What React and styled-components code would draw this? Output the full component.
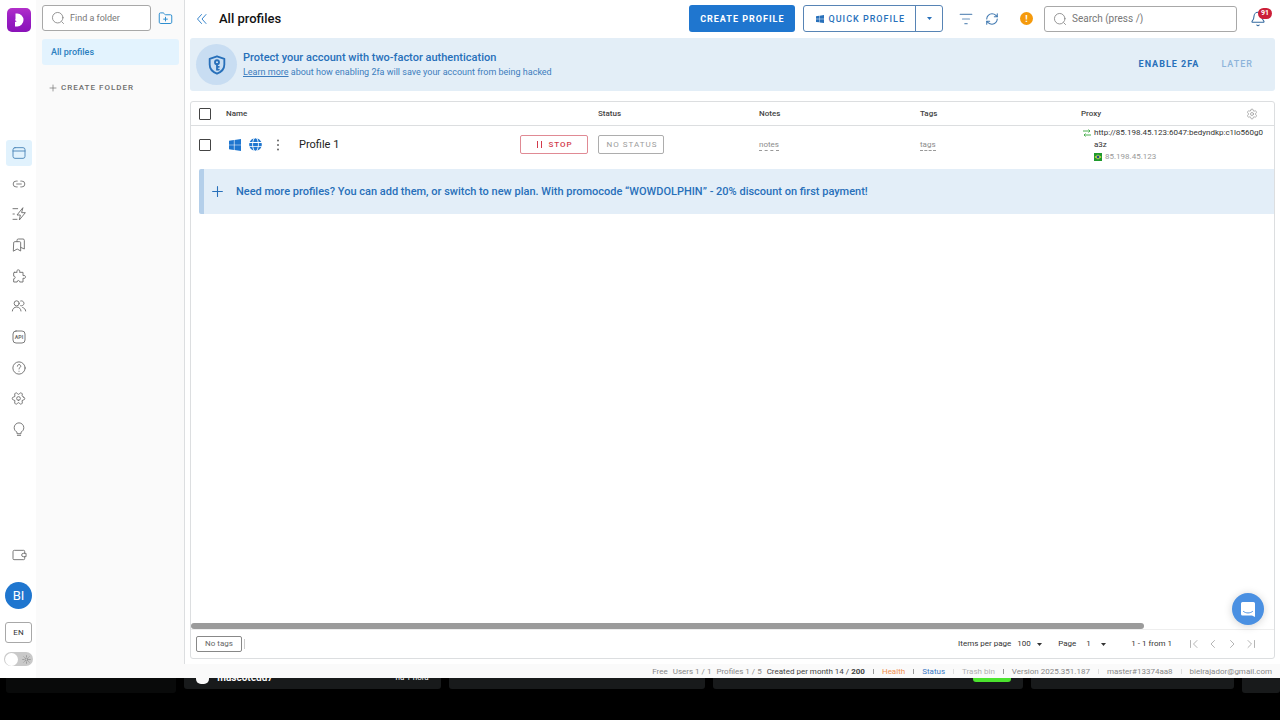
import React from "react";
import styled, { createGlobalStyle } from "styled-components";
import { Link2, Settings, FolderPlus, RefreshCw, Bell } from "lucide-react";
import { FaGlobe } from "react-icons/fa";

const blue = "#1f76cf";
const deepBlue = "#2870ba";
const line = "#dcdee0";

const GlobalStyle = createGlobalStyle`
  *, *::before, *::after { box-sizing: border-box; }
  body {
    margin: 0;
    background: #000;
    color: #333;
    font: 400 9px/12px Roboto, "Liberation Sans", sans-serif;
  }
  button, input, select {
    font: inherit;
    color: inherit;
    margin: 0;
    padding: 0;
    border: 0;
    background: none;
  }
  button { cursor: pointer; }
  svg { display: block; flex: none; }
`;

const Screen = styled.div`
  min-height: 100vh;
  display: flex;
  flex-direction: column;
`;

const AppWindow = styled.div`
  flex: 1;
  display: grid;
  grid-template-columns: 36px 149px minmax(0, 1fr);
  background: #fafafa;
`;

const NavRail = styled.nav`
  display: flex;
  flex-direction: column;
  align-items: center;
  padding: 8px 0 12px 1px;
  background: #fff;
`;

const Logo = styled.a`
  display: block;
  border-radius: 5px;
`;

const NavGroup = styled.div`
  display: flex;
  flex-direction: column;
  justify-content: space-between;
  height: 302px;
  margin: 108px 0 auto;
`;

const NavButton = styled.button`
  display: grid;
  place-items: center;
  width: 26px;
  height: 26px;
  border-radius: 3px;
  color: ${(p) => (p.$active ? "#4b86b8" : "#707070")};
  background: ${(p) => (p.$active ? "#e1f2fd" : "transparent")};
`;

const Avatar = styled.button`
  width: 27px;
  height: 27px;
  margin-top: 14px;
  border-radius: 50%;
  background: ${blue};
  color: #fff;
  font-size: 13px;
`;

const Language = styled.button`
  width: 27px;
  height: 21px;
  margin-top: 13px;
  border: 1px solid #a8a8a8;
  border-radius: 3px;
  font-size: 8px;
`;

const ThemeSwitch = styled.label`
  display: flex;
  align-items: center;
  gap: 4px;
  width: 29px;
  height: 14px;
  margin-top: 9px;
  padding: 0 2px 0 1px;
  border-radius: 7px;
  background: #c9c9c9;
  color: #858585;
  input {
    appearance: none;
    width: 13px;
    height: 13px;
    border-radius: 50%;
    background: #fff;
  }
`;

const Folders = styled.aside`
  padding: 5px 5px 0 6px;
  border-right: 1px solid ${line};
  margin-bottom: 14px;
`;

const FolderTools = styled.div`
  display: flex;
  align-items: center;
  gap: 7px;
`;

const SearchBox = styled.label`
  display: flex;
  align-items: center;
  gap: 5px;
  width: ${(p) => p.$width};
  height: 26px;
  padding-left: 8px;
  border: 1px solid #a8a8a8;
  border-radius: 3px;
  background: #fff;
  color: #808080;
  font-size: ${(p) => p.$size};
  input { flex: 1; min-width: 0; outline: 0; }
  input::placeholder { color: #777; opacity: 1; }
`;

const IconButton = styled.button`
  display: grid;
  place-items: center;
  color: ${(p) => p.$color || "#666"};
  &:disabled { color: #b5b5b5; }
`;

const FolderLink = styled.a`
  display: flex;
  align-items: center;
  height: 26px;
  margin-top: 8px;
  padding-left: 9px;
  border-radius: 3px;
  background: #e3f3fe;
  color: #2b80c0;
  font-size: 9px;
  font-weight: 500;
  text-decoration: none;
`;

const CreateFolder = styled.button`
  display: flex;
  align-items: center;
  gap: 4px;
  margin: 17px 0 0 7px;
  color: #6e6e6e;
  font-size: 8px;
  font-weight: 500;
  letter-spacing: 1px;
`;

const Main = styled.main`
  display: flex;
  flex-direction: column;
`;

const Content = styled.div`
  flex: 1;
  display: flex;
  flex-direction: column;
  padding: 0 5px 5px;
  background: #fff;
`;

const TopBar = styled.header`
  display: flex;
  align-items: center;
  height: 38px;
  padding: 0 2px 1px 6px;
`;

const PageTitle = styled.h1`
  margin: 0 auto 0 11px;
  color: #111;
  font-size: 13px;
  font-weight: 500;
  line-height: 16px;
`;

const PrimaryButton = styled.button`
  height: 27px;
  padding: 0 10px 0 11px;
  border-radius: 3px;
  background: ${blue};
  color: #fff;
  font-size: 9px;
  font-weight: 700;
  letter-spacing: 1px;
`;

const SplitButton = styled.div`
  display: flex;
  height: 27px;
  margin-left: 8px;
  border: 1px solid #5784b5;
  border-radius: 3px;
  color: ${deepBlue};
  button {
    display: flex;
    align-items: center;
    justify-content: center;
    gap: 5px;
    padding: 0 10px 0 12px;
    font-size: 9px;
    font-weight: 500;
    letter-spacing: 1px;
  }
  button + button {
    width: 27px;
    padding: 0;
    border-left: 1px solid #5784b5;
  }
`;

const Actions = styled.div`
  display: flex;
  align-items: center;
  gap: 12px;
  margin: 0 11px 0 16px;
`;

const Warning = styled.button`
  width: 13px;
  height: 13px;
  margin-left: 9px;
  border-radius: 50%;
  background: #f59a0c;
  color: #fff;
  font-weight: 700;
`;

const Notifications = styled.button`
  position: relative;
  margin: 0 7px 0 13px;
  color: #33699e;
`;

const Badge = styled.span`
  position: absolute;
  top: -3px;
  left: 8px;
  padding: 0 3px;
  border-radius: 6px;
  background: #cc1f38;
  color: #fff;
  font-size: 7px;
  font-weight: 700;
  line-height: 11px;
`;

const Banner = styled.section`
  display: flex;
  align-items: center;
  height: 53px;
  padding: 0 11px 0 6px;
  border-radius: 3px;
  background: #e3eef7;
  color: ${deepBlue};
`;

const BannerIcon = styled.div`
  display: grid;
  place-items: center;
  width: 41px;
  height: 41px;
  border-radius: 50%;
  background: #c8ddf2;
`;

const BannerText = styled.div`
  margin: 0 auto 0 6px;
  h2 { margin: 0; font-size: 11px; font-weight: 500; line-height: 15px; }
  p { margin: 0; font-size: 9px; line-height: 15px; color: #3d7dbd; }
  a { color: inherit; }
`;

const TextButton = styled.button`
  padding: 6px 11px 8px;
  color: ${(p) => (p.$muted ? "#8db4da" : deepBlue)};
  font-size: 9px;
  font-weight: ${(p) => (p.$muted ? 500 : 700)};
  letter-spacing: 1px;
`;

const Card = styled.section`
  flex: 1;
  display: flex;
  flex-direction: column;
  margin-top: 10px;
  border: 1px solid ${line};
  border-radius: 3px;
`;

const Table = styled.table`
  width: 100%;
  table-layout: fixed;
  border-collapse: collapse;
  th, td { padding: 0; text-align: left; }
  th {
    height: 24px;
    font-size: 8px;
    font-weight: 500;
    color: #444;
  }
  thead { box-shadow: inset 0 -1px ${line}; }
  td { height: 37px; color: #8c8c8c; }
  th:first-child, td:first-child { padding-left: 8px; }
`;

const Col = styled.col`
  width: ${(p) => p.$width};
`;

const Check = styled.input`
  appearance: none;
  display: block;
  width: 12px;
  height: 12px;
  border: 1px solid #444;
  border-radius: 1px;
  &:checked { background: ${blue}; }
`;

const HeadSplit = styled.div`
  display: flex;
  align-items: center;
  justify-content: space-between;
  padding-right: 16px;
`;

const NameCell = styled.div`
  display: flex;
  align-items: center;
  gap: 8px;
  padding: 0 10px 0 3px;
  color: ${blue};
`;

const ProfileName = styled.span`
  margin: 0 auto 0 4px;
  color: #222;
  font-size: 11px;
`;

const OutlineButton = styled.button`
  display: inline-flex;
  align-items: center;
  justify-content: center;
  gap: 6px;
  width: ${(p) => p.$width};
  height: 19px;
  padding-left: 2px;
  border: 1px solid ${(p) => (p.$danger ? "#e08a94" : "#adadad")};
  border-radius: 2px;
  color: ${(p) => (p.$danger ? "#d23a4b" : "#9c9c9c")};
  font-size: 8px;
  font-weight: ${(p) => (p.$danger ? 500 : 400)};
  letter-spacing: 1px;
`;

const DashedButton = styled.button`
  border-bottom: 1px dashed #999;
  font-size: 8px;
  line-height: 10px;
`;

const Proxy = styled.div`
  display: grid;
  grid-template-columns: 8px minmax(0, 1fr);
  column-gap: 3px;
  padding: 0 10px 0 2px;
  color: #333;
  font-size: 8px;
  word-break: break-all;
  > svg { margin-top: 2px; }
`;

const ProxyIp = styled.div`
  display: flex;
  align-items: center;
  gap: 3px;
  grid-column: 2;
  color: #9a9a9a;
`;

const Promo = styled.button`
  display: flex;
  align-items: center;
  gap: 12px;
  height: 45px;
  margin: 6px 0 auto 8px;
  padding-left: 7px;
  border-left: 5px solid #b4cfea;
  border-radius: 2px 0 0 2px;
  background: #e3eef8;
  color: ${deepBlue};
  font-size: 11px;
  font-weight: 500;
`;

const ScrollTrack = styled.div`
  display: flex;
  align-items: flex-end;
  height: 8px;
`;

const ScrollThumb = styled.div`
  width: 88%;
  height: 6px;
  border-radius: 3px;
  background: #9b9b9b;
`;

const CardFooter = styled.footer`
  display: flex;
  align-items: center;
  height: 29px;
  padding: 0 17px 0 5px;
  border-top: 1px solid #eee;
  font-size: 8px;
  color: #333;
`;

const NoTags = styled.button`
  width: 46px;
  height: 16px;
  border: 1px solid #888;
  border-radius: 2px;
  color: #666;
`;

const Divider = styled.span`
  width: 1px;
  height: 10px;
  margin: 0 auto 0 2px;
  background: #ccc;
`;

const PagerField = styled.label`
  display: flex;
  align-items: center;
  margin-right: 16px;
  select {
    appearance: none;
    width: ${(p) => p.$width};
    margin: 0 5px 0 ${(p) => p.$gap};
  }
`;

const PagerCount = styled.span`
  margin: 0 16px 0 9px;
`;

const PagerButtons = styled.div`
  display: flex;
  gap: 7px;
`;

const StatusBar = styled.footer`
  display: flex;
  align-items: center;
  justify-content: flex-end;
  height: 14px;
  padding: 1px 8px 0 0;
  color: #888;
  font-size: 8px;
  white-space: nowrap;
`;

const StatusItem = styled.span`
  margin-left: 5px;
  color: ${(p) => p.$color || "inherit"};
  a { color: inherit; text-decoration: none; }
  b { font-weight: 700; }
`;

const StatusMark = styled.span`
  width: 1px;
  height: 5px;
  margin: 0 3px 0 8px;
  background: ${(p) => (p.$light ? "#ddd" : "#999")};
`;

const ChatButton = styled.button`
  position: fixed;
  right: 16px;
  bottom: 95px;
  display: grid;
  place-items: center;
  width: 32px;
  height: 32px;
  border-radius: 50%;
  background: #4a90e2;
  box-shadow: 0 1px 8px rgba(0, 0, 0, 0.18);
`;

const Backdrop = styled.div`
  display: grid;
  grid-template-columns: 170fr 256fr 256fr 309fr 203fr 38fr;
  column-gap: 8px;
  height: 42px;
  padding-left: 6px;
  background: #000;
`;

const DarkCard = styled.div`
  display: flex;
  justify-content: ${(p) => (p.$end ? "flex-end" : "space-between")};
  height: ${(p) => (p.$tall ? "15px" : "11px")};
  padding: 0 12px;
  border-radius: 0 0 3px 3px;
  background: ${(p) => (p.$dim ? "#090a0a" : "#181a1b")};
  color: #fafafa;
`;

const DarkUser = styled.strong`
  display: flex;
  align-items: center;
  gap: 8px;
  height: 12px;
  margin-top: -6px;
  font-size: 10px;
  &::before {
    content: "";
    width: 13px;
    height: 12px;
    border-radius: 5px;
    background: #fafafa;
  }
`;

const DarkTime = styled.span`
  margin-top: -6px;
  font-size: 8px;
`;

const GreenPill = styled.span`
  width: 38px;
  height: 4px;
  border-radius: 0 0 3px 3px;
  background: #4be32e;
`;

const Icon = ({ size = 16, width = 1.4, children }) => (
  <svg width={size} height={size} viewBox="0 0 24 24" fill="none" stroke="currentColor"
    strokeWidth={width} strokeLinecap="round" strokeLinejoin="round" aria-hidden="true">
    {children}
  </svg>
);

const WindowsIcon = ({ size }) => (
  <svg width={size} height={size} viewBox="0 0 24 24" fill="currentColor" aria-hidden="true">
    <path d="M0 3.449L9.75 2.1v9.451H0zM10.949 1.949L24 0v11.4H10.949zM0 12.6h9.75v9.451L0 20.699zM10.949 12.6H24V24l-13.051-1.801z" />
  </svg>
);

const Caret = () => (
  <svg width="5" height="3" viewBox="0 0 5 3" fill="currentColor" aria-hidden="true">
    <path d="M0 0h5L2.5 3z" />
  </svg>
);

const Lens = () => (
  <Icon size={14} width={1.4}>
    <circle cx="11.5" cy="11.5" r="9" />
    <path d="M18.5 18.5 21.5 21.5" />
  </Icon>
);

const Plus = ({ size, width = 2 }) => (
  <Icon size={size} width={width}><path d="M12 3v18M3 12h18" /></Icon>
);

const SideGear = styled(Settings)`
  transform: rotate(90deg);
`;

const navItems = [
  ["Profiles", <Icon key="i"><rect x="3" y="4" width="18" height="16" rx="3" /><path d="M3 9h18" /></Icon>],
  ["Proxies", <Link2 key="i" size={14} strokeWidth={1.5} />],
  ["Scripts", <Icon key="i"><path d="M3 4h7M3 12h2M3 20h6M17.500 3 9 13.500h5L12.500 21 21.500 10h-5z" /></Icon>],
  ["Bookmarks", <Icon key="i"><path d="M4 8.500A1.500 1.500 0 0 1 5.500 7H13a1.500 1.500 0 0 1 1.500 1.500V21l-5.200-3L4 21zM9 7V5a2 2 0 0 1 2-2h7a2 2 0 0 1 2 2v13l-5.500-2.500" /></Icon>],
  ["Extensions", <Icon key="i"><path d="M5 6.500h4.200C8 3.800 9.500 2.800 11 2.800s3 1 1.800 3.700H18v5c2.700-1 3.700.4 3.700 1.900s-1 2.900-3.700 1.900V21h-5c.2-3-4-3-3.800 0H4v-4.800c3 .2 3-4.200 0-4V7.500a1 1 0 0 1 1-1z" /></Icon>],
  ["Users", <Icon key="i"><circle cx="8.500" cy="8" r="3.800" /><path d="M2 19.500a6.500 6 0 0 1 13 0M14.500 4.400a3.800 3.800 0 1 1 0 7.200M17.500 14.300c3 .9 4.200 2.700 4.500 5.200" /></Icon>],
  ["API", (
    <Icon key="i">
      <rect x="3" y="3" width="18" height="18" rx="4.500" />
      <text x="12" y="14.500" textAnchor="middle" fontSize="8" fontWeight="700" fill="currentColor" stroke="none">API</text>
    </Icon>
  )],
  ["Help", <Icon key="i"><circle cx="12" cy="12" r="9.200" /><path d="M9.600 9.300a2.500 2.500 0 1 1 3.700 2.200c-.9.500-1.300 1-1.300 2M12 16.800v.2" /></Icon>],
  ["Settings", <SideGear key="i" size={15} strokeWidth={1.5} />],
  ["Tips", <Icon key="i"><path d="M9 18.500v-1.700C6.500 15.500 4.800 13 4.800 10a7.200 7.200 0 0 1 14.400 0c0 3-1.700 5.500-4.200 6.800v1.700zM9.500 21.500h5" /></Icon>],
];

function Navigation() {
  return (
    <NavRail aria-label="Main">
      <Logo href="#" aria-label="Home">
        <svg width="24" height="24" viewBox="0 0 24 24">
          <defs>
            <linearGradient id="logo" x1="0" y1="0" x2="0" y2="1">
              <stop offset="0" stopColor="#b22fc9" />
              <stop offset="0.400" stopColor="#9a1fc4" />
              <stop offset="1" stopColor="#8a12b8" />
            </linearGradient>
          </defs>
          <rect width="24" height="24" rx="5" fill="url(#logo)" />
          <path d="M8.500 5.500h1.800a6.200 6.500 0 0 1 0 13H8V14l1.800-.8L8 12.200l.5-1.200z" fill="#fff" />
        </svg>
      </Logo>
      <NavGroup>
        {navItems.map(([label, icon], i) => (
          <NavButton key={label} $active={i === 0} aria-label={label}>{icon}</NavButton>
        ))}
      </NavGroup>
      <NavButton aria-label="Billing">
        <Icon>
          <path d="M20.500 9V6.500A1.500 1.500 0 0 0 19 5H5a2 2 0 0 0-2 2v10.500A1.500 1.500 0 0 0 4.500 19H19a1.500 1.500 0 0 0 1.500-1.500V15" />
          <path d="M22 9.500h-3.500a2.500 2.500 0 0 0 0 5H22z" />
        </Icon>
      </NavButton>
      <Avatar>BI</Avatar>
      <Language>EN</Language>
      <ThemeSwitch>
        <input type="checkbox" aria-label="Dark theme" />
        <Icon size={9} width={2}>
          <circle cx="12" cy="12" r="4" />
          <path d="M12 2v2M12 20v2M2 12h2M20 12h2M5 5l1 1M18 18l1 1M5 19l1-1M18 6l1-1" />
        </Icon>
      </ThemeSwitch>
    </NavRail>
  );
}

function FolderPanel() {
  return (
    <Folders>
      <FolderTools>
        <SearchBox $width="109px" $size="9px">
          <Lens />
          <input placeholder="Find a folder" aria-label="Find a folder" />
        </SearchBox>
        <IconButton $color="#2f8fd0" aria-label="New folder"><FolderPlus size={15} strokeWidth={1.6} /></IconButton>
      </FolderTools>
      <FolderLink href="#">All profiles</FolderLink>
      <CreateFolder><Plus size={8} />CREATE FOLDER</CreateFolder>
    </Folders>
  );
}

function Header() {
  return (
    <TopBar>
      <IconButton $color="#3b87cd" aria-label="Collapse folders">
        <Icon size={12} width={2}><path d="M11 3 3 12l8 9M20 3l-8 9 8 9" /></Icon>
      </IconButton>
      <PageTitle>All profiles</PageTitle>
      <PrimaryButton>CREATE PROFILE</PrimaryButton>
      <SplitButton>
        <button><WindowsIcon size={8} />QUICK PROFILE</button>
        <button aria-label="More options"><Caret /></button>
      </SplitButton>
      <Actions>
        <IconButton $color="#6a93bd" aria-label="Filter">
          <Icon size={14} width={2}><path d="M2 4h20M6 12h12M10 20h4" /></Icon>
        </IconButton>
        <IconButton $color="#3f78b0" aria-label="Refresh"><RefreshCw size={14} strokeWidth={1.8} /></IconButton>
        <Warning aria-label="Warning">!</Warning>
      </Actions>
      <SearchBox $width="193px" $size="10px">
        <Lens />
        <input placeholder="Search (press /)" aria-label="Search" />
      </SearchBox>
      <Notifications aria-label="Notifications">
        <Bell size={16} strokeWidth={1.6} />
        <Badge>91</Badge>
      </Notifications>
    </TopBar>
  );
}

function ProfilesTable() {
  return (
    <Table>
      <colgroup>
        <Col $width="35px" />
        <Col />
        <Col $width="161px" />
        <Col $width="161px" />
        <Col $width="161px" />
        <Col $width="193px" />
      </colgroup>
      <thead>
        <tr>
          <th><Check type="checkbox" aria-label="Select all" /></th>
          <th>Name</th>
          <th>Status</th>
          <th>Notes</th>
          <th>Tags</th>
          <th>
            <HeadSplit>
              Proxy
              <IconButton $color="#999" aria-label="Table settings"><Settings size={12} strokeWidth={1.5} /></IconButton>
            </HeadSplit>
          </th>
        </tr>
      </thead>
      <tbody>
        <tr>
          <td><Check type="checkbox" aria-label="Select Profile 1" /></td>
          <td>
            <NameCell>
              <WindowsIcon size={12} />
              <FaGlobe size={13} />
              <IconButton aria-label="Profile menu">
                <svg width="17" height="12" viewBox="0 0 17 12" fill="currentColor">
                  <circle cx="8" cy="1.500" r="1" /><circle cx="8" cy="6" r="1" /><circle cx="8" cy="10.500" r="1" />
                </svg>
              </IconButton>
              <ProfileName>Profile 1</ProfileName>
              <OutlineButton $danger $width="68px">
                <svg width="5" height="7" viewBox="0 0 5 7" stroke="currentColor"><path d="M.5 0v7M4.500 0v7" /></svg>
                STOP
              </OutlineButton>
            </NameCell>
          </td>
          <td><OutlineButton $width="66px">NO STATUS</OutlineButton></td>
          <td><DashedButton>notes</DashedButton></td>
          <td><DashedButton>tags</DashedButton></td>
          <td>
            <Proxy>
              <svg width="8" height="8" viewBox="0 0 8 8" fill="none" stroke="#4caf50">
                <path d="M0 2h7M5.500 .5 7 2 5.500 3.500M8 6H1M2.500 4.500 1 6l1.500 1.500" />
              </svg>
              <span>http://85.198.45.123:6047:bedyndkp:c1lo560g0a3z</span>
              <ProxyIp>
                <svg width="8" height="8" viewBox="0 0 8 8">
                  <rect width="8" height="8" fill="#1f9a2c" />
                  <path d="M4 1.500 7.500 4 4 6.500.5 4z" fill="#d8e24a" />
                  <circle cx="4" cy="4" r="1.400" fill="#1c4f8f" />
                </svg>
                85.198.45.123
              </ProxyIp>
            </Proxy>
          </td>
        </tr>
      </tbody>
    </Table>
  );
}

const pageIcons = [
  ["First page", "M5 5v14M18 5l-7 7 7 7"],
  ["Previous page", "M15 5l-7 7 7 7"],
  ["Next page", "M9 5l7 7-7 7"],
  ["Last page", "M6 5l7 7-7 7M19 5v14"],
];

function Pager() {
  return (
    <CardFooter>
      <NoTags>No tags</NoTags>
      <Divider />
      <PagerField $width="15px" $gap="6px">
        Items per page
        <select defaultValue="100"><option>100</option></select>
        <Caret />
      </PagerField>
      <PagerField $width="10px" $gap="10px">
        Page
        <select defaultValue="1"><option>1</option></select>
        <Caret />
      </PagerField>
      <PagerCount>1 - 1 from 1</PagerCount>
      <PagerButtons>
        {pageIcons.map(([label, d]) => (
          <IconButton key={label} aria-label={label} disabled>
            <Icon size={12} width={2}><path d={d} /></Icon>
          </IconButton>
        ))}
      </PagerButtons>
    </CardFooter>
  );
}

function Status() {
  return (
    <StatusBar>
      <StatusItem>Free</StatusItem>
      <StatusItem>Users 1 / 1</StatusItem>
      <StatusItem>Profiles 1 / 5</StatusItem>
      <StatusItem $color="#444">Created per month 14 / <b>200</b></StatusItem>
      <StatusMark />
      <StatusItem $color="#f0904f"><a href="#">Health</a></StatusItem>
      <StatusMark />
      <StatusItem $color="#3a78c4"><a href="#">Status</a></StatusItem>
      <StatusMark $light />
      <StatusItem $color="#b0b0b0"><a href="#">Trash bin</a></StatusItem>
      <StatusMark />
      <StatusItem>Version 2025.351.187</StatusItem>
      <StatusMark $light />
      <StatusItem>master#13374aa8</StatusItem>
      <StatusMark $light />
      <StatusItem>bielrajador@gmail.com</StatusItem>
    </StatusBar>
  );
}

export default function App() {
  return (
    <Screen>
      <GlobalStyle />
      <AppWindow>
        <Navigation />
        <FolderPanel />
        <Main>
          <Content>
            <Header />
            <Banner>
              <BannerIcon>
                <Icon size={22} width={2}>
                  <path d="M12 2.500 20 5.300v6.200c0 5-3.400 8.300-8 10-4.600-1.700-8-5-8-10V5.300z" />
                  <circle cx="12" cy="9" r="2.200" />
                  <path d="M12 11.200v6M12 14h2M12 17h2" />
                </Icon>
              </BannerIcon>
              <BannerText>
                <h2>Protect your account with two-factor authentication</h2>
                <p><a href="#">Learn more</a> about how enabling 2fa will save your account from being hacked</p>
              </BannerText>
              <TextButton>ENABLE 2FA</TextButton>
              <TextButton $muted>LATER</TextButton>
            </Banner>
            <Card>
              <ProfilesTable />
              <Promo>
                <Plus size={13} width={2} />
                Need more profiles? You can add them, or switch to new plan. With promocode “WOWDOLPHIN” - 20% discount on first payment!
              </Promo>
              <ScrollTrack><ScrollThumb /></ScrollTrack>
              <Pager />
            </Card>
          </Content>
          <Status />
        </Main>
      </AppWindow>
      <Backdrop>
        <DarkCard $dim $tall />
        <DarkCard>
          <DarkUser>mascotedd7</DarkUser>
          <DarkTime>há 1 hora</DarkTime>
        </DarkCard>
        <DarkCard />
        <DarkCard $end><GreenPill /></DarkCard>
        <DarkCard />
        <DarkCard $tall />
      </Backdrop>
      <ChatButton aria-label="Open chat">
        <svg width="16" height="17" viewBox="0 0 16 17">
          <path d="M2.500 1h11A1.500 1.500 0 0 1 15 2.500V16l-3-1.500H2.500A1.500 1.500 0 0 1 1 13V2.500A1.500 1.500 0 0 1 2.500 1z" fill="#fff" />
          <path d="M3.500 10.500c2.500 2 6.500 2 9 0" fill="none" stroke="#4a90e2" strokeLinecap="round" />
        </svg>
      </ChatButton>
    </Screen>
  );
}
